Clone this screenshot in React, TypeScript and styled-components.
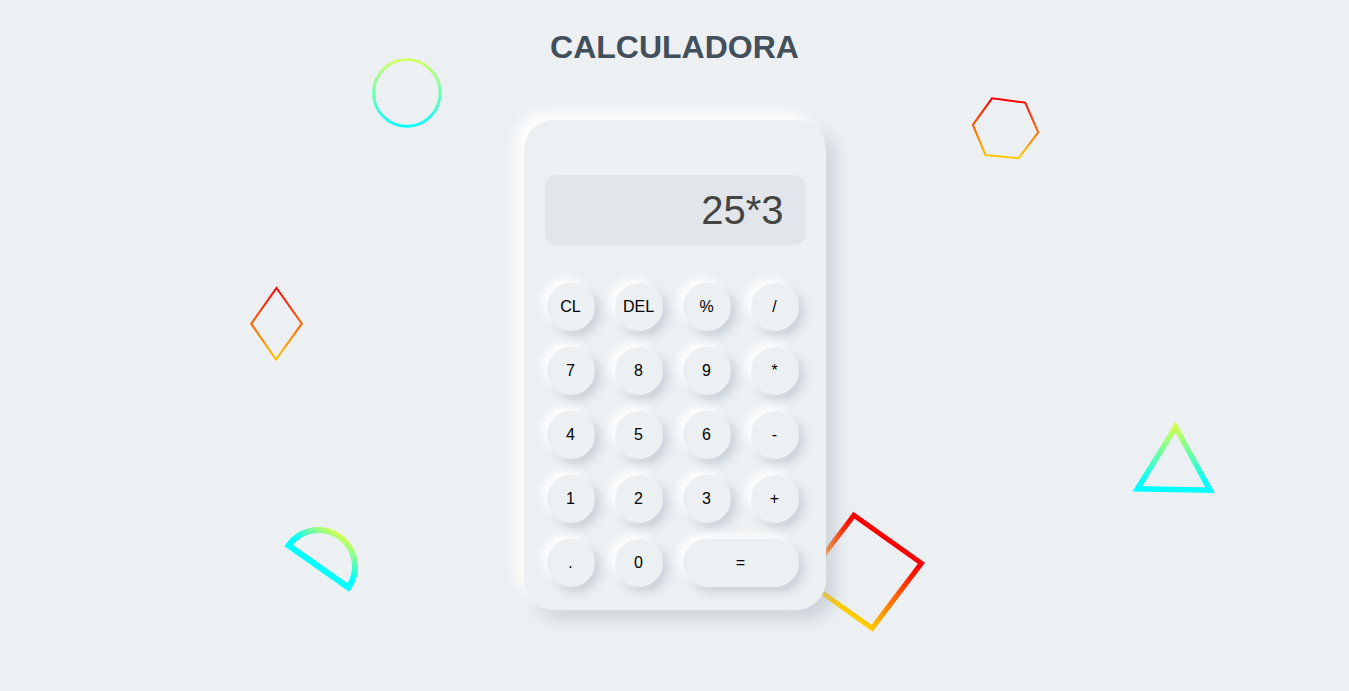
import React from "react";
import styled, { createGlobalStyle } from "styled-components";

const GlobalStyle = createGlobalStyle`
  html, body {
    margin: 0;
    padding: 0;
    background: #ecf0f3;
    font-family: "Liberation Sans", Arial, sans-serif;
  }
  * { box-sizing: border-box; }
`;

const Page = styled.div`
  position: relative;
  min-height: 691px;
  overflow: hidden;
  display: flex;
  flex-direction: column;
  align-items: center;
`;

const Title = styled.h1`
  margin: 0;
  padding-top: 29px;
  font-size: 32px;
  line-height: 37px;
  font-weight: 700;
  color: #434f5b;
  letter-spacing: 0;
`;

const Calculator = styled.div`
  position: relative;
  z-index: 1;
  margin-top: 54px;
  width: 302px;
  height: 490px;
  padding: 55px 21px 0 21px;
  border-radius: 30px;
  background: #ecf0f3;
  box-shadow: -8px -8px 16px rgba(255, 255, 255, 0.95),
    9px 9px 16px rgba(170, 180, 192, 0.5);
`;

const Display = styled.div`
  height: 70px;
  border-radius: 10px;
  background: #e2e6ea;
  padding-right: 21px;
  text-align: right;
  font-size: 40px;
  line-height: 70px;
  color: #444444;
`;

const Keys = styled.div`
  margin-top: 38px;
  padding-left: 2px;
  display: grid;
  grid-template-columns: repeat(4, 48px);
  grid-auto-rows: 48px;
  column-gap: 20px;
  row-gap: 16px;
`;

const Key = styled.button<{ $wide?: boolean }>`
  grid-column: ${(p) => (p.$wide ? "span 2" : "auto")};
  width: 100%;
  height: 48px;
  border: none;
  border-radius: 24px;
  background: #ecf0f3;
  color: #000;
  font-family: "Liberation Sans", Arial, sans-serif;
  font-size: 16px;
  padding: 0;
  cursor: pointer;
  box-shadow: -5px -5px 10px rgba(255, 255, 255, 0.95),
    5px 5px 10px rgba(165, 175, 188, 0.5);
`;

const Deco = styled.svg<{ $x: number; $y: number; $w: number; $h: number }>`
  position: absolute;
  left: ${(p) => p.$x}px;
  top: ${(p) => p.$y}px;
  width: ${(p) => p.$w}px;
  height: ${(p) => p.$h}px;
  z-index: 0;
  overflow: visible;
`;

type ShapeProps = { x: number; y: number; w: number; h: number; children: React.ReactNode };

const Shape = ({ x, y, w, h, children }: ShapeProps) => (
  <Deco $x={x} $y={y} $w={w} $h={h} viewBox={`${x} ${y} ${w} ${h}`}>
    {children}
  </Deco>
);

const keys: { label: string; wide?: boolean }[] = [
  { label: "CL" }, { label: "DEL" }, { label: "%" }, { label: "/" },
  { label: "7" }, { label: "8" }, { label: "9" }, { label: "*" },
  { label: "4" }, { label: "5" }, { label: "6" }, { label: "-" },
  { label: "1" }, { label: "2" }, { label: "3" }, { label: "+" },
  { label: "." }, { label: "0" }, { label: "=", wide: true },
];

export default function App() {
  return (
    <>
      <GlobalStyle />
      <Page>
        <Shape x={360} y={50} w={95} h={90}>
          <defs>
            <linearGradient id="gCircle" gradientUnits="userSpaceOnUse" x1="0" y1="59" x2="0" y2="127">
              <stop offset="0" stopColor="#d6ff5c" />
              <stop offset="1" stopColor="#00ffff" />
            </linearGradient>
          </defs>
          <circle cx={406.8} cy={93} r={33.3} fill="none" stroke="url(#gCircle)" strokeWidth={2.8} />
        </Shape>

        <Shape x={960} y={88} w={90} h={80}>
          <defs>
            <linearGradient id="gHex" gradientUnits="userSpaceOnUse" x1="0" y1="100" x2="0" y2="157">
              <stop offset="0" stopColor="#ff0000" />
              <stop offset="1" stopColor="#ffc800" />
            </linearGradient>
          </defs>
          <polygon
            points="992,98.3 1025.2,102.6 1038.2,132.3 1018.5,158.3 985.5,155 972.8,125"
            fill="none"
            stroke="url(#gHex)"
            strokeWidth={2}
          />
        </Shape>

        <Shape x={240} y={278} w={72} h={92}>
          <defs>
            <linearGradient id="gDiamond" gradientUnits="userSpaceOnUse" x1="0" y1="289" x2="0" y2="358">
              <stop offset="0" stopColor="#ff0000" />
              <stop offset="1" stopColor="#ffc000" />
            </linearGradient>
          </defs>
          <polygon
            points="276.5,288 301.8,323.7 276,359.5 251.2,323.7"
            fill="none"
            stroke="url(#gDiamond)"
            strokeWidth={2}
          />
        </Shape>

        <Shape x={275} y={518} w={90} h={80}>
          <defs>
            <linearGradient id="gHalf" gradientUnits="userSpaceOnUse" x1="318" y1="566" x2="340" y2="534">
              <stop offset="0.25" stopColor="#00ffff" />
              <stop offset="1" stopColor="#d4ff55" />
            </linearGradient>
          </defs>
          <path
            d="M 288.6 545.5 A 36.5 36.5 0 0 1 348.4 587.5 Z"
            fill="none"
            stroke="url(#gHalf)"
            strokeWidth={6}
            strokeLinejoin="miter"
          />
        </Shape>

        <Shape x={1125} y={415} w={100} h={85}>
          <defs>
            <linearGradient id="gTri" gradientUnits="userSpaceOnUse" x1="0" y1="426" x2="0" y2="482">
              <stop offset="0" stopColor="#d4ff50" />
              <stop offset="1" stopColor="#00ffff" />
            </linearGradient>
          </defs>
          <polygon
            points="1175.6,427 1210,490.2 1137.4,488.8"
            fill="none"
            stroke="url(#gTri)"
            strokeWidth={5.5}
          />
        </Shape>

        <Shape x={795} y={505} w={140} h={135}>
          <defs>
            <linearGradient id="gSquare" gradientUnits="userSpaceOnUse" x1="887.6" y1="539" x2="838" y2="604">
              <stop offset="0.05" stopColor="#ff0000" />
              <stop offset="1" stopColor="#ffcc00" />
            </linearGradient>
          </defs>
          <polygon
            points="853.9,515.2 921.4,563.2 872.1,628.2 804.6,580.2"
            fill="none"
            stroke="url(#gSquare)"
            strokeWidth={5}
          />
        </Shape>

        <Title>CALCULADORA</Title>
        <Calculator>
          <Display>25*3</Display>
          <Keys>
            {keys.map((k) => (
              <Key key={k.label} $wide={k.wide}>
                {k.label}
              </Key>
            ))}
          </Keys>
        </Calculator>
      </Page>
    </>
  );
}
